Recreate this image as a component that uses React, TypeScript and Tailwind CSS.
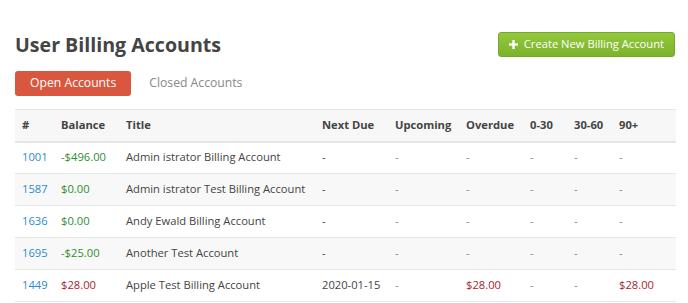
import React, { useState } from 'react';

interface Account {
  id: string;
  balance: string;
  balanceTone: 'green' | 'red';
  title: string;
  nextDue: string;
  upcoming: string;
  overdue: string;
  d30: string;
  d60: string;
  d90: string;
}

const accounts: Account[] = [
  { id: '1001', balance: '-$496.00', balanceTone: 'green', title: 'Admin istrator Billing Account', nextDue: '-', upcoming: '-', overdue: '-', d30: '-', d60: '-', d90: '-' },
  { id: '1587', balance: '$0.00', balanceTone: 'green', title: 'Admin istrator Test Billing Account', nextDue: '-', upcoming: '-', overdue: '-', d30: '-', d60: '-', d90: '-' },
  { id: '1636', balance: '$0.00', balanceTone: 'green', title: 'Andy Ewald Billing Account', nextDue: '-', upcoming: '-', overdue: '-', d30: '-', d60: '-', d90: '-' },
  { id: '1695', balance: '-$25.00', balanceTone: 'green', title: 'Another Test Account', nextDue: '-', upcoming: '-', overdue: '-', d30: '-', d60: '-', d90: '-' },
  { id: '1449', balance: '$28.00', balanceTone: 'red', title: 'Apple Test Billing Account', nextDue: '2020-01-15', upcoming: '-', overdue: '$28.00', d30: '-', d60: '-', d90: '$28.00' },
];

function Money({ value }: { value: string }) {
  if (value === '-') return <span className="text-[#888]">-</span>;
  return <span className="text-[#a8262c]">{value}</span>;
}

export default function App() {
  const [tab, setTab] = useState<'open' | 'closed'>('open');

  return (
    <div className="min-h-screen bg-white pl-[15px] pr-[12px] pt-[32px] font-['Open_Sans',sans-serif] text-[11.2px] text-[#333]">
      <div className="flex items-center justify-between">
        <h1 className="text-[19.6px] font-bold leading-[25px] text-[#444]">User Billing Accounts</h1>
        <button className="mr-[1px] flex h-[25px] items-center gap-[6px] rounded-[3px] border border-[#78a82a] bg-gradient-to-b from-[#93c83e] to-[#7cb32a] pl-[10px] pr-[10px] text-[11.2px] text-white">
          <svg width="9" height="9" viewBox="0 0 10 10" className="fill-white">
            <rect x="3.7" y="0" width="2.6" height="10" />
            <rect x="0" y="3.7" width="10" height="2.6" />
          </svg>
          Create New Billing Account
        </button>
      </div>

      <div className="mt-[14px] flex gap-[3px]">
        <button
          onClick={() => setTab('open')}
          className={`h-[25px] rounded-[3px] px-[15px] text-[12.2px] ${tab === 'open' ? 'bg-[#d9573f] text-white' : 'text-[#888]'}`}
        >
          Open Accounts
        </button>
        <button
          onClick={() => setTab('closed')}
          className={`h-[25px] rounded-[3px] px-[15px] text-[12.2px] ${tab === 'closed' ? 'bg-[#d9573f] text-white' : 'text-[#888]'}`}
        >
          Closed Accounts
        </button>
      </div>

      <table className="mt-[13px] w-full table-fixed border-collapse text-left">
        <colgroup>
          <col className="w-[39px]" />
          <col className="w-[65px]" />
          <col className="w-[196px]" />
          <col className="w-[73px]" />
          <col className="w-[71px]" />
          <col className="w-[64px]" />
          <col className="w-[44px]" />
          <col className="w-[45px]" />
          <col />
        </colgroup>
        <thead>
          <tr className="h-[32px] border-t border-b-2 border-[#e6e6e6] bg-[#f7f7f7] text-[#444]">
            {['#', 'Balance', 'Title', 'Next Due', 'Upcoming', 'Overdue', '0-30', '30-60', '90+'].map((h) => (
              <th key={h} className="whitespace-nowrap px-[7px] font-bold">{h}</th>
            ))}
          </tr>
        </thead>
        <tbody>
          {accounts.map((a, i) => (
            <tr key={a.id} className={`h-[32px] border-b border-[#e6e6e6] ${i % 2 === 1 ? 'bg-[#f8f8f8]' : 'bg-white'}`}>
              <td className="px-[7px] text-[#2a8bcf]">{a.id}</td>
              <td className={`whitespace-nowrap px-[7px] ${a.balanceTone === 'green' ? 'text-[#2f8f2f]' : 'text-[#a8262c]'}`}>{a.balance}</td>
              <td className="whitespace-nowrap px-[7px] text-[#444]">{a.title}</td>
              <td className="whitespace-nowrap px-[7px] text-[#444]">{a.nextDue}</td>
              <td className="px-[7px] text-[#888]">{a.upcoming}</td>
              <td className="px-[7px]"><Money value={a.overdue} /></td>
              <td className="px-[7px]"><Money value={a.d30} /></td>
              <td className="px-[7px]"><Money value={a.d60} /></td>
              <td className="px-[7px]"><Money value={a.d90} /></td>
            </tr>
          ))}
        </tbody>
      </table>
    </div>
  );
}
